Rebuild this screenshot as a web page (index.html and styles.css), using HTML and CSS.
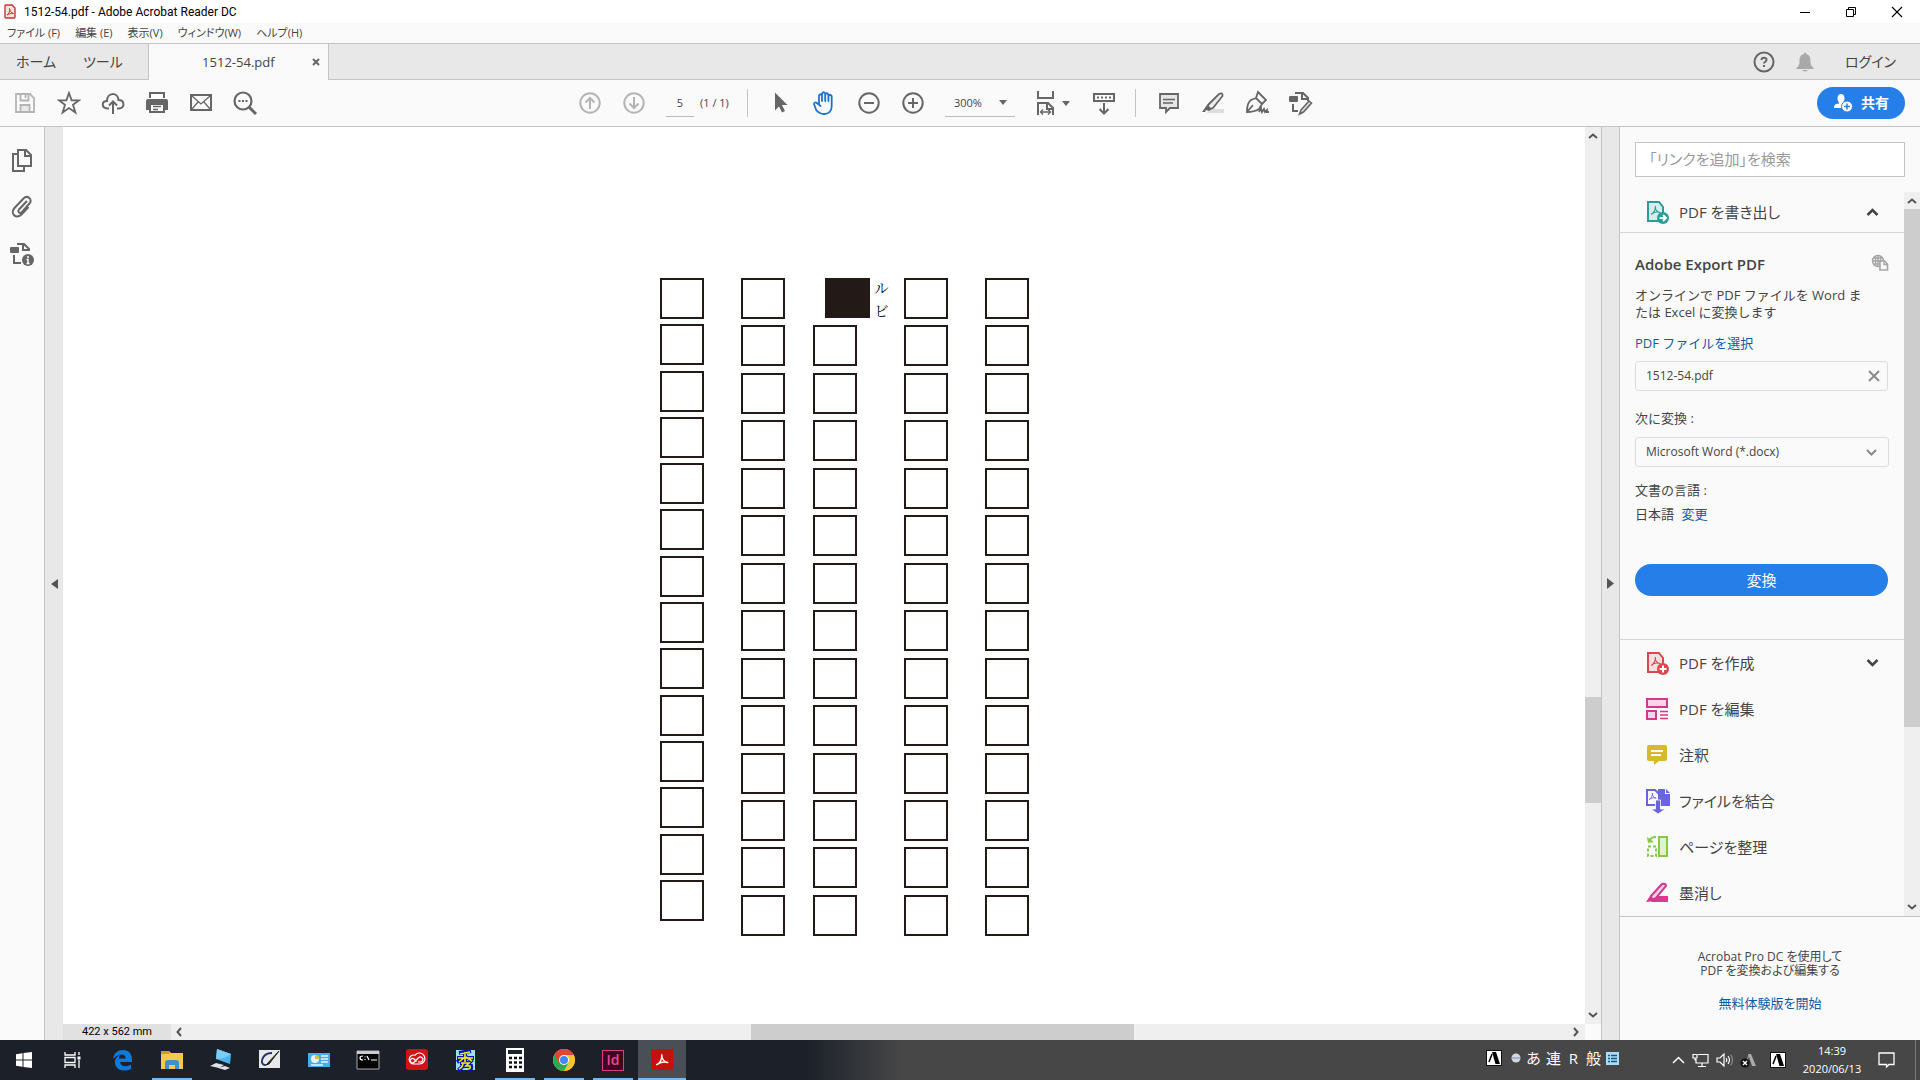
FILE: index.html
```html
<!DOCTYPE html>
<html lang="ja">
<head>
<meta charset="utf-8">
<title>1512-54.pdf - Adobe Acrobat Reader DC</title>
<link rel="stylesheet" href="styles.css">
</head>
<body>
<svg width="0" height="0" class="defs" aria-hidden="true">
  <defs>
    <symbol id="acro" viewBox="0 0 12 12"><path d="M1.5 10C4 9 6.300 5 5.800 1.500C5.500 5 8 8 11 8.200C7 7 4 8 1.500 10Z" fill="none" stroke="currentColor" stroke-width="1.200" stroke-linejoin="round"/></symbol>
    <symbol id="up" viewBox="0 0 10 6"><path d="M1 5L5 1.500L9 5" fill="none" stroke="currentColor" stroke-width="2"/></symbol>
    <symbol id="down" viewBox="0 0 10 6"><path d="M1 1L5 4.500L9 1" fill="none" stroke="currentColor" stroke-width="2"/></symbol>
    <symbol id="ime" viewBox="0 0 16 16"><rect width="16" height="16" fill="#111"/><rect x="1" y="1" width="14" height="14" fill="#fff"/><path d="M6 2h4l4 12h-4.500z" fill="#000"/><path d="M6 4L3 12" stroke="#000" stroke-width="1.500"/></symbol>
  </defs>
</svg>
<header>
  <div class="titlebar">
    <svg width="12" height="16" viewBox="0 0 12 16"><path d="M1 2q0-1 1-1h6l3 3v9q0 1-1 1H2q-1 0-1-1z" fill="#fbe3e1" stroke="#c5352f" stroke-width="1.400"/><path d="M3 11C5 10 6 7 5.500 4.500C6 7 7 9 9.500 9.500C7 9 5 10 3 11Z" fill="none" stroke="#d5322b"/></svg>
    <h1>1512-54.pdf - Adobe Acrobat Reader DC</h1>
    <div class="winbtns">
      <button aria-label="最小化"><svg width="12" height="12"><path d="M1 6.500h10" stroke="#000"/></svg></button>
      <button aria-label="元に戻す"><svg width="12" height="12" fill="none" stroke="#000"><path d="M1.500 3.500h7v7h-7zM3.500 3v-1.500h7v7H9"/></svg></button>
      <button aria-label="閉じる"><svg width="12" height="12"><path d="M1 1l10 10M11 1L1 11" stroke="#000" stroke-width="1.100"/></svg></button>
    </div>
  </div>
  <nav class="menubar"><button>ファイル (F)</button><button>編集 (E)</button><button>表示(V)</button><button>ウィンドウ(W)</button><button>ヘルプ(H)</button></nav>
  <div class="tabs">
    <button class="home">ホーム</button><button class="tools">ツール</button>
    <div class="tab"><span>1512-54.pdf</span><button aria-label="タブを閉じる"><svg width="8" height="8"><path d="M1 1l6 6M7 1L1 7" stroke="#666" stroke-width="2"/></svg></button></div>
    <div class="account">
      <button aria-label="ヘルプ"><svg width="22" height="22" fill="none" stroke="#666" stroke-width="2"><circle cx="11" cy="11" r="9.500"/><path d="M8.500 9C8.500 6 13.500 6 13.500 9C13.500 10.500 11 11 11 12.500M11 14v2"/></svg></button>
      <button aria-label="通知"><svg width="18" height="20" fill="#a9a9a9"><path d="M8 1q1-1 2 0v1c4 1 4.500 4 4.500 7 0 4 1 5 3 7v1H.500v-1c2-2 3-3 3-7 0-3 .500-6 4.500-7zM6 18h6q-3 3-6 0z"/></svg></button>
      <button class="login">ログイン</button>
    </div>
  </div>
  <div class="toolbar">
    <div class="group">
      <button aria-label="保存" class="off"><svg width="24" height="24" fill="none" stroke="currentColor" stroke-width="1.800"><path d="M3 3h14l4 4v14H3z"/><path d="M7.500 3v6.500h8V3M12.500 4v3"/><path d="M7.500 20v-6h9v6" fill="#e8e8e8"/></svg></button>
      <button aria-label="お気に入り"><svg width="24" height="24" fill="none" stroke="currentColor" stroke-width="1.800"><path d="M12 2l2.600 7.300H22l-6 4.500 2.400 7.700L12 17l-6.400 4.500L8 13.800 2 9.300h7.400z"/></svg></button>
      <button aria-label="アップロード"><svg width="24" height="24" fill="none" stroke="currentColor" stroke-width="2"><path d="M8 17.500H6.500C0 17 .500 10 6 10C6 1 17 1 17.500 9C24 9 24 17.500 18 17.500h-2"/><path d="M12 23V11M8 14.500l4-4 4 4"/></svg></button>
      <button aria-label="印刷"><svg width="24" height="24" fill="currentColor"><path d="M4 1h16v6H4zM3 8h18q2 0 2 2v9h-3v3H4v-3H1v-9q0-2 2-2z"/><path d="M6 3h12v5H6zM6 14h12v6H6z" fill="#fff"/><path d="M8 15.500h8M8 18.500h5" stroke="currentColor" stroke-width="1.500"/></svg></button>
      <button aria-label="メール"><svg width="24" height="24" fill="none" stroke="currentColor"><rect x="2" y="4" width="20" height="15" stroke-width="2"/><path d="M3 5l9 8 9-8M3 18l6-7M21 18l-6-7" stroke-width="1.300"/></svg></button>
      <button aria-label="検索"><svg width="26" height="26" fill="none" stroke="currentColor" stroke-width="2.200"><circle cx="11" cy="11" r="8.500"/><path d="M17 17l7 7" stroke-width="3"/><path d="M6.500 11h2m1.500 0h2m1.500 0h2" stroke-width="2"/></svg></button>
    </div>
    <div class="group center">
      <button aria-label="前のページ" class="off"><svg width="24" height="24" fill="none" stroke="currentColor" stroke-width="2"><circle cx="12" cy="12" r="9.700"/><path d="M12 18V7M7.500 11.500L12 7l4.500 4.500"/></svg></button>
      <button aria-label="次のページ" class="off"><svg width="24" height="24" fill="none" stroke="currentColor" stroke-width="2"><circle cx="12" cy="12" r="9.700"/><path d="M12 6v11M7.500 12.500L12 17l4.500-4.500"/></svg></button>
      <input class="page" aria-label="ページ" value="5"><span class="count">(1 / 1)</span>
      <span class="sep"></span>
      <button aria-label="選択"><svg width="24" height="24" fill="currentColor"><path d="M6 1.500v18l4-4 3 6 3-1.500-3-6h5.500z"/></svg></button>
      <button aria-label="手のひら" class="blue"><svg width="26" height="26" fill="none" stroke="currentColor" stroke-width="1.800" stroke-linecap="round"><path d="M7 14V5.500q1.500-2.500 3 0V11M10 6V3.500q1.600-2.500 3.200 0V11M13.200 4.500q1.600-2.500 3.200 0V11M16.400 7.500V6q1.700-2 3.300 0V16c0 5-3 8-7.500 8-4 0-6-1.500-8-4L2 14q.500-3 3.500-.500L8.500 16"/></svg></button>
      <button aria-label="縮小"><svg width="24" height="24" fill="none" stroke="currentColor" stroke-width="2"><circle cx="12" cy="12" r="9.700"/><path d="M7 12h10"/></svg></button>
      <button aria-label="拡大"><svg width="24" height="24" fill="none" stroke="currentColor" stroke-width="2"><circle cx="12" cy="12" r="9.700"/><path d="M7 12h10M12 7v10"/></svg></button>
      <div class="zoom"><select aria-label="倍率"><option>300%</option></select><svg width="8" height="5"><path d="M0 0h8L4 5z" fill="#666"/></svg></div>
      <button aria-label="幅に合わせる" class="fit"><svg width="20" height="26" fill="none" stroke="currentColor" stroke-width="2"><path d="M2 1v7h15V1"/><path d="M2 25V13h10l5 5v7M11 13v6h6"/><path d="M5 22h9M7 19.500L4.500 22 7 24.500M12 19.500l2.500 2.500-2.500 2.500" stroke-width="1.300"/></svg><svg width="8" height="5"><path d="M0 0h8L4 5z" fill="#666"/></svg></button>
      <button aria-label="ツールバーを隠す"><svg width="24" height="26" fill="none" stroke="currentColor" stroke-width="2"><rect x="2" y="4" width="20" height="7"/><path d="M5 7.500h14" stroke-dasharray="2 2"/><path d="M12 13v10M7.500 19l4.500 4.500 4.500-4.500"/></svg></button>
      <span class="sep"></span>
      <button aria-label="注釈"><svg width="24" height="24" fill="#e5e5e5" stroke="currentColor" stroke-width="1.800"><path d="M3 3h18v14h-8l-4 4v-4H3z"/><path d="M6 8.500h12M6 12h10" stroke-width="1.300"/></svg></button>
      <button aria-label="ハイライト"><svg width="26" height="24"><path d="M10 18h14v4H7z" fill="#ddd"/><path d="M8 14L19 3q4-2 3.500 2L13 17l-4 1z" fill="#eee" stroke="currentColor" stroke-width="1.800"/><path d="M7 14l5 4-3 2-3-1-1 2H2z" fill="currentColor"/></svg></button>
      <button aria-label="署名"><svg width="26" height="26" fill="none" stroke="currentColor" stroke-width="1.800"><path d="M3 22c0-6 1-10 4-12l5-2 6 6-3 5c-3 2-7 3-12 3zM3 22l6-7M12 8l2-6 8 8-4 4"/><path d="M15 22l2-4 1 4 2-3 1 3 2-2v2h2"/></svg></button>
      <button aria-label="その他のツール"><svg width="26" height="26" fill="none" stroke="currentColor" stroke-width="2"><path d="M7 3h8l5 5v3M14 3v6h6M5 14v7h5"/><rect x="1" y="6" width="9" height="6" rx="1" fill="currentColor" stroke="none"/><path d="M13 20l8-9 2.500 2-8 9-4 2z" fill="#ddd" stroke-width="1.600"/></svg></button>
    </div>
    <button class="share"><svg width="20" height="18" fill="#fff"><path d="M4.500 4.500a3.500 4.500 0 0 1 7 0c0 2-1 3.500-1.500 4v1c2 .500 2 1 2 1L10 14H1c0-4 2-4 5-4.500v-1C5.500 8 4.500 6.500 4.500 4.500z"/><circle cx="14" cy="12.500" r="5.500" stroke="#267fe8"/><path d="M11 12.500h6M14 9.500v6" stroke="#267fe8" stroke-width="1.500"/></svg>共有</button>
  </div>
</header>
<main>
  <nav class="rail">
    <button aria-label="サムネール"><svg width="24" height="26" fill="none" stroke="currentColor" stroke-width="2"><path d="M8 3h8l5 5v11H8zM15 3v6h6"/><path d="M8 7H3v17h11v-5"/></svg></button>
    <button aria-label="添付ファイル"><svg width="24" height="26" fill="none" stroke="currentColor" stroke-width="2"><path d="M17 7L9 15.500c-2 2.500 1 4.500 3 2.500l7.500-8.500C23 5.500 17.500.500 13.500 4.500L4.500 14c-5 6 2 11.500 7 6.500l7-7.500"/></svg></button>
    <button aria-label="文書情報"><svg width="26" height="26" fill="none" stroke="currentColor" stroke-width="2"><path d="M8 3h7l5 5v2M14 3v6h6M5 14v8h7"/><rect x="1" y="6" width="9" height="6" rx="1" fill="currentColor" stroke="none"/><circle cx="19" cy="19" r="6" fill="currentColor" stroke="none"/><path d="M19 15v2M17.500 18.500H19v4m-1.500 0h3" stroke="#fff" stroke-width="1.500"/></svg></button>
  </nav>
  <button class="gutter left" aria-label="ナビゲーションを開く"><svg width="7" height="10"><path d="M7 0v10L0 5z" fill="#555"/></svg></button>
  <section class="doc">
    <div class="view">
      <div class="page-art">
        <div class="col short"><i></i><i></i><i></i><i></i><i></i><i></i><i></i><i></i><i></i><i></i><i></i><i></i><i></i><i></i></div>
        <div class="col"><i></i><i></i><i></i><i></i><i></i><i></i><i></i><i></i><i></i><i></i><i></i><i></i><i></i><i></i></div>
        <div class="col"><div class="ruby"><b></b><div><span>ル</span><span>ビ</span></div></div><i></i><i></i><i></i><i></i><i></i><i></i><i></i><i></i><i></i><i></i><i></i><i></i><i></i></div>
        <div class="col"><i></i><i></i><i></i><i></i><i></i><i></i><i></i><i></i><i></i><i></i><i></i><i></i><i></i><i></i></div>
        <div class="col"><i></i><i></i><i></i><i></i><i></i><i></i><i></i><i></i><i></i><i></i><i></i><i></i><i></i><i></i></div>
      </div>
    </div>
    <div class="vbar"><svg width="10" height="6"><use href="#up"/></svg><div class="track"><div class="thumb"></div></div><svg width="10" height="6"><use href="#down"/></svg></div>
    <div class="hbar"><span class="size">422 x 562 mm</span><svg width="6" height="10"><path d="M5 1L1.500 5L5 9" fill="none" stroke="#555" stroke-width="2"/></svg><div class="track"><div class="thumb"></div></div><svg width="6" height="10"><path d="M1 1l3.500 4L1 9" fill="none" stroke="#555" stroke-width="2"/></svg></div>
  </section>
  <button class="gutter right" aria-label="ツールパネルを閉じる"><svg width="7" height="11"><path d="M0 0v11l7-5.500z" fill="#555"/></svg></button>
  <aside>
    <input class="search" aria-label="検索" placeholder="「リンクを追加」を検索">
    <div class="scroller">
      <div class="list">
        <button class="tool open"><svg width="24" height="24"><path d="M3 2h11l4 5v14H3z" fill="#d5eeec" stroke="#2a9b96" stroke-width="2"/><use href="#acro" x="5" y="5" width="11" height="11" color="#2a9b96"/><circle cx="18" cy="18" r="6" fill="#2a9b96"/><path d="M14.500 18h6M18 15l3 3-3 3" fill="none" stroke="#fff" stroke-width="2"/></svg>PDF を書き出し<svg class="chev" width="13" height="8"><path d="M1.500 7l5-5 5 5" fill="none" stroke="#444" stroke-width="2.500"/></svg></button>
        <div class="export">
          <div class="head"><h2>Adobe Export PDF</h2><svg width="18" height="18" fill="none" stroke="#a5a5a5" stroke-width="1.400"><circle cx="7" cy="7" r="5.500"/><path d="M7 1v12M1 7h12M2 4h10M4.500 2v10M9.500 2v6M2.500 10h6"/><path d="M9 7h4.500l3 3v6H9z" fill="#fafafa" stroke-width="1.600"/><path d="M13 7v3.500h3.500"/></svg></div>
          <p>オンラインで PDF ファイルを Word または Excel に変換します</p>
          <a href="#" class="pick">PDF ファイルを選択</a>
          <div class="file"><span>1512-54.pdf</span><button aria-label="削除"><svg width="12" height="12"><path d="M1 1l10 10M11 1L1 11" stroke="#8a8a8a" stroke-width="2"/></svg></button></div>
          <label for="fmt">次に変換 :</label>
          <div class="format"><select id="fmt"><option>Microsoft Word (*.docx)</option></select><svg width="11" height="7"><path d="M1 1l4.500 4.500L10 1" fill="none" stroke="#8a8a8a" stroke-width="2"/></svg></div>
          <div class="lang">文書の言語 :</div>
          <div class="change">日本語 <a href="#">変更</a></div>
          <button class="convert">変換</button>
        </div>
        <button class="tool"><svg width="24" height="24"><path d="M3 2h11l4 5v14H3z" fill="#fbdfe0" stroke="#d7484f" stroke-width="2"/><use href="#acro" x="5" y="5" width="11" height="11" color="#d7484f"/><circle cx="18" cy="18" r="6" fill="#d7484f"/><path d="M14.500 18h7M18 14.500v7" stroke="#fff" stroke-width="2"/></svg>PDF を作成<svg class="chev" width="13" height="8"><path d="M1.500 1l5 5 5-5" fill="none" stroke="#444" stroke-width="2.500"/></svg></button>
        <button class="tool"><svg width="24" height="24" fill="#fad4e8" stroke="#cf3a8d" stroke-width="2"><path d="M2 2h20v8H2zM2 14h9v8H2z"/><path d="M15 14.500h8M15 18h8M15 21.500h8" stroke-width="1.400"/></svg>PDF を編集</button>
        <button class="tool"><svg width="24" height="24"><path d="M4 2h16q2 0 2 2v12q0 2-2 2h-6l-5 4v-4H4q-2 0-2-2V4q0-2 2-2z" fill="#d9b92c"/><path d="M6 8h12M6 12h10" stroke="#fff" stroke-width="1.800"/></svg>注釈</button>
        <button class="tool"><svg width="26" height="26"><path d="M13 1h7v5h5v12H13z" fill="#6a63e2"/><path d="M21 1l4 4h-4z" fill="#6a63e2"/><path d="M2 2h8l4 4v11H2z" fill="#fff" stroke="#6a63e2" stroke-width="2"/><use href="#acro" x="3" y="4" width="9" height="9" color="#6a63e2"/><path d="M10.500 12h5v9h5L13 26 6 21h4.500z" fill="#6a63e2" stroke="#fff" stroke-width=".8"/></svg>ファイルを結合</button>
        <button class="tool"><svg width="24" height="24" fill="none" stroke="#86c94a" stroke-width="2"><path d="M14 2h8v19h-8z" fill="#dff2cf"/><path d="M3 11.500h8v9.500H3z" stroke-dasharray="3 2"/><path d="M11 2Q6 2 4 6"/><path d="M2 2l1 6 6-1z" fill="#86c94a" stroke="none"/></svg>ページを整理</button>
        <button class="tool"><svg width="24" height="24"><path d="M12 15h11v6H6z" fill="#da3b8e"/><path d="M6 15L17 3q4-1 4 2L11 17l-4 2z" fill="#f9cfe4" stroke="#cf3a8d" stroke-width="2"/><path d="M5 15l5 5-9 1z" fill="#cf3a8d"/></svg>墨消し</button>
      </div>
      <div class="vbar"><svg width="10" height="6"><use href="#up"/></svg><div class="track"><div class="thumb"></div></div><svg width="10" height="6"><use href="#down"/></svg></div>
    </div>
    <div class="promo"><p>Acrobat Pro DC を使用して<br>PDF を変換および編集する</p><a href="#">無料体験版を開始</a></div>
  </aside>
</main>
<footer>
  <div class="apps">
    <button aria-label="スタート"><svg width="16" height="16" fill="#fff"><path d="M0 2.200L6.500 1.300v6.200H0zM7.500 1.100L16 0v7.500H7.500zM0 8.500h6.500v6.200L0 13.800zM7.500 8.500H16V16l-8.500-1.100z"/></svg></button>
    <button aria-label="タスクビュー" class="view-btn"><svg width="17" height="16" fill="none" stroke="#fff" stroke-width="1.300"><path d="M1 0v3h10V0M1 5.500h10v5H1zM1 16v-3h10v3M15 0v3M15 8v8"/><path d="M13.500 4.500h3v3h-3z" fill="#fff" stroke="none"/></svg></button>
    <button aria-label="Edge"><svg width="22" height="22"><path d="M1 10C2 4 6 1 11 1c6 0 9 4 9 10v2H8c1 5 7 5 11 2.500V20C10 24 2 20 3 12c.5-3 3-5.500 6-6.500C7 6.500 7 8 7 9.500h6.500C14 4 6 4 1 10z" fill="#0c79dc"/></svg></button>
    <button aria-label="エクスプローラー" class="run"><svg width="24" height="22"><path d="M1 2h8l2 2h12v16H1z" fill="#f7c84e"/><path d="M1 2h8l1 3H1z" fill="#d9982a"/><path d="M5 20v-6q0-3 3-3h8q3 0 3 3v6h-4v-4H9v4z" fill="#3d93c9"/></svg></button>
    <button aria-label="リモート"><svg width="24" height="22"><path d="M8 0l14 5-1 10L7 10z" fill="#49b6ee"/><path d="M8 0l14 5-7 4-8 1z" fill="#7bcdf5"/><path d="M1 17l6-3 8 2-5 3zM9 19l7-2 5 2-5 2z" fill="#dde3e8"/></svg></button>
    <button aria-label="ペイント"><svg width="24" height="22"><path d="M1 1h21v18H1z" fill="#e8e8e8"/><path d="M14 4C3 4 1 17 8 16" fill="none" stroke="#1d3264" stroke-width="1.800"/><path d="M21 2L8 16l3-1z" fill="#222" stroke="#222"/></svg></button>
    <button aria-label="パネル"><svg width="22" height="18"><path d="M0 2h22v14H0z" fill="#48aee6"/><circle cx="7" cy="8" r="4" fill="#dff3ff"/><path d="M7 8V4a4 4 0 0 1 4 4z" fill="#e8b73a"/><path d="M13 5h7M13 8h7M13 11h7M3 14h12" stroke="#e6f6ff" stroke-width="1.300"/></svg></button>
    <button aria-label="コマンドプロンプト"><svg width="24" height="20"><path d="M1 1h22v18H1z" fill="#050505" stroke="#aaa"/><path d="M1 1h22v3H1z" fill="#ccc"/><path d="M7 6q-3 0-3 2t3 2M9 6.500v.8M9 9v1M11 6l2 4M15 10h6" fill="none" stroke="#fff" stroke-width="1.200"/></svg></button>
    <button aria-label="Creative Cloud"><svg width="22" height="22"><rect width="22" height="21" rx="3" fill="#cf1318"/><path d="M8 15a4.500 4.500 0 1 1 1-8.800A5.500 5.500 0 1 1 13.500 15zM10.500 12.500L8 10a2.200 2.200 0 1 0 0 3.200l4.500-4.400a2.500 2.500 0 1 1 1 4H12" fill="none" stroke="#fff" stroke-width="1.200"/></svg></button>
    <button aria-label="秀丸"><svg width="22" height="22"><path d="M1 1h19v20H1z" fill="#9ae6e6"/><path d="M4 4l12-2M2 9h17M10 3v10M10 8l-8 5M11 8l7 4M5 14h9l-3 3h5q1 4-3 4M8 14q0 5-5 7" fill="none" stroke="#0710c7" stroke-width="4"/><path d="M5 5l10-2M3 9h15M10 3v10M10 8l-6 5M11 8l6 4M6 14h8l-3 3h4q1 3-2 3M8 14q0 4-4 6" fill="none" stroke="#f4ee18" stroke-width="1.600"/></svg></button>
    <button aria-label="電卓" class="run"><svg width="18" height="24"><path d="M0 0h18v24H0z" fill="#fff"/><path d="M2 2h14v4H2z" fill="#1c212b"/><path d="M3 10h3m2 0h3m2 0h3M3 14.500h3m2 0h3m2 0h3M3 19h3m2 0h3m2 0h3" stroke="#111" stroke-width="2.500"/></svg></button>
    <button aria-label="Chrome" class="run"><svg width="22" height="22"><circle cx="11" cy="11" r="11" fill="#f5c52b"/><path d="M11 11L1.500 5.500A11 11 0 0 0 11 22l5-8z" fill="#2da94f"/><path d="M11 11V6h9.700A11 11 0 0 0 1.500 5.500L6 14z" fill="#e4453a"/><path d="M11 6h9.700A11 11 0 0 1 11 22l5-9z" fill="#f5c52b"/><circle cx="11" cy="11" r="5" fill="#fff"/><circle cx="11" cy="11" r="4" fill="#4285f4"/></svg></button>
    <button aria-label="InDesign" class="run"><span class="indd">Id</span></button>
    <button aria-label="Acrobat" class="run active"><svg width="22" height="22"><rect width="22" height="21" rx="1" fill="#c6100c"/><use href="#acro" x="4" y="4" width="14" height="14" color="#fff"/></svg></button>
  </div>
  <div class="imebar"><svg width="16" height="16"><use href="#ime"/></svg><svg width="10" height="10"><circle cx="5" cy="5" r="4.500" fill="#cfd8e3"/><path d="M1 5h8" stroke="#8292a5"/></svg><span>あ</span><span>連</span><span>R</span><span>般</span><svg width="13" height="13"><path d="M0 0h13v13H0z" fill="#a9def8"/><path d="M2 3.500h2m1 0h6M2 6.500h2m1 0h6M2 9.500h2m1 0h6" stroke="#1b5480" stroke-width="1.300"/></svg></div>
  <div class="tray">
    <svg width="13" height="8"><path d="M1 7l5.500-5.500L12 7" fill="none" stroke="#fff" stroke-width="1.500"/></svg>
    <svg width="17" height="15" fill="none" stroke="#fff" stroke-width="1.200"><path d="M6 1.500h10v8.500H4V6M10 10v3.500M6 13.500h8M1 1.500h4V5H1zM3 5v2h1"/></svg>
    <svg width="17" height="14" fill="none" stroke="#fff" stroke-width="1.200"><path d="M1 5h3l4-4v12L4 9H1zM10 5q1.500 2 0 4M12 3q3 4 0 8"/><path d="M14.500 1.500q4 5.500 0 11" stroke="#888"/></svg>
    <svg width="18" height="16"><path d="M8 2h3l5 12h-4z" fill="#aaa"/><path d="M9 3L6 11" stroke="#aaa"/><circle cx="5" cy="11" r="4.500" fill="#111"/><path d="M3 9l4 4M7 9l-4 4" stroke="#fff" stroke-width="1.400"/></svg>
    <svg class="ime2" width="16" height="16"><use href="#ime"/></svg>
    <div class="clock">14:39<br>2020/06/13</div>
    <button aria-label="通知センター"><svg width="18" height="17"><path d="M1 1h15v11.500h-5L8.500 15v-2.500H1z" fill="none" stroke="#fff" stroke-width="1.300"/></svg></button>
    <span class="peek"></span>
  </div>
</footer>
</body>
</html>
```
FILE: styles.css
```css
* { box-sizing: border-box; }
body {
  margin: 0; height: 100vh; display: flex; flex-direction: column; overflow: hidden;
  font: 12px/16px "Open Sans", "Noto Sans CJK JP", sans-serif;
  font-feature-settings: "palt"; color: #444; background: #fafafa;
}
button { border: 0; padding: 0; margin: 0; background: none; font: inherit; color: inherit; font-feature-settings: inherit; display: flex; align-items: center; justify-content: center; white-space: nowrap; }
input, select { font: inherit; color: inherit; font-feature-settings: inherit; border: 0; background: none; padding: 0; margin: 0; min-width: 0; border-radius: 0; }
select { appearance: none; width: 100%; height: 100%; }
a { color: #0d5aa7; text-decoration: none; }
h1, h2, p { margin: 0; }
svg { flex: none; display: block; }
.defs { position: absolute; }

.titlebar { height: 23px; background: #fff; display: flex; align-items: center; padding-left: 4px; gap: 8px; color: #000; }
.titlebar h1 { font: 12px/16px Roboto, sans-serif; flex: 1; }
.winbtns { display: flex; }
.winbtns button { width: 46px; height: 22px; }
.menubar { height: 20px; display: flex; gap: 15px; padding-left: 7px; font-size: 11px; }
.tabs { height: 37px; display: flex; background: #e8e8e8; border: solid #c4c4c4; border-width: 1px 0; font-size: 14px; }
.home { margin-left: 16px; }
.tools { margin-left: 27px; margin-right: 25px; }
.tab { width: 181px; margin-bottom: -1px; background: #fafafa; border: solid #c4c4c4; border-width: 0 1px; display: flex; align-items: center; }
.tab span { flex: 1; padding-left: 36px; text-align: center; font-size: 13px; }
.tab button { padding-right: 8px; width: 36px; justify-content: flex-end; }
.account { margin-left: auto; display: flex; padding-right: 24px; }
.account button:first-child { margin-right: 21px; }
.login { margin-left: 31px; }

.toolbar { height: 47px; display: grid; grid-template-columns: 1fr auto 1fr; align-items: center; padding-right: 15px; border-bottom: 1px solid #c4c4c4; color: #666; }
.group { display: flex; align-items: center; }
.group:first-child { padding-left: 3px; }
.group button { width: 44px; height: 46px; }
.center { padding-right: 14px; }
.off, .group .off { color: #b4b4b4; }
.group .blue { color: #1e74cc; }
.page { width: 28px; height: 28px; margin-left: 10px; text-align: center; border-bottom: 1px solid #bbb; }
.page, .count, .zoom { color: #444; font-size: 11px; }
.count { margin-left: 6px; width: 47px; }
.sep { width: 1px; height: 28px; background: #c4c4c4; margin-right: 11px; }
.zoom { width: 70px; height: 28px; margin: 0 9px 0 10px; display: flex; align-items: center; border-bottom: 1px solid #bbb; }
.zoom select { padding-left: 9px; }
.zoom svg { margin-right: 8px; }
.group .fit { width: 58px; gap: 6px; }
.fit + button { margin-right: 9px; }
.share { justify-self: end; width: 88px; height: 32px; border-radius: 16px; background: #267fe8; color: #fff; font-size: 14px; font-weight: 700; gap: 8px; }

main { flex: 1; min-height: 0; display: flex; }
.rail { width: 45px; border-right: 1px solid #c4c4c4; display: flex; flex-direction: column; align-items: center; gap: 21px; padding-top: 20px; color: #666; }
.gutter { width: 18px; background: #e8e8e8; }
.gutter.right { width: 19px; border: solid #c4c4c4; border-width: 0 1px; }
.doc { flex: 1; display: grid; grid-template: 1fr 16px / 1fr 16px; background: #fafafa; min-width: 0; }
.view { background: #fff; padding-top: 151px; overflow: hidden; }
.page-art { display: flex; width: 370px; height: 658px; margin-left: 39.2%; }
.col { width: 44px; display: flex; flex-direction: column; justify-content: space-between; }
.col + .col { margin-left: 37px; }
.col:nth-child(3) { margin-left: 28px; }
.col:nth-child(4) { margin-left: 47px; }
.col.short { height: 643px; }
.col i { height: 41px; border: 2px solid #231a17; }
.ruby { display: flex; height: 41px; margin-left: 12px; gap: 5px; }
.ruby b { flex: none; width: 45px; height: 40px; background: #231a17; }
.ruby div { display: flex; flex-direction: column; justify-content: space-between; }
.ruby span { font: 14px/18px "Noto Serif CJK JP", "Noto Sans CJK JP", serif; color: #000; font-feature-settings: normal; }
.vbar { width: 16px; background: #efefef; display: flex; flex-direction: column; align-items: center; padding: 6px 0; color: #555; }
.vbar .track { flex: 1; width: 100%; margin: 5px 0; display: flex; flex-direction: column; }
.doc .vbar .track { padding-top: 553px; }
.vbar .thumb { height: 106px; background: #cdcdcd; }
.hbar { background: #efefef; display: flex; align-items: center; padding-right: 6px; }
.size { width: 108px; background: #e1e1e1; color: #000; text-align: center; font-family: Roboto, sans-serif; font-size: 11px; }
.hbar svg { margin-left: 5px; }
.hbar .track { flex: 1; height: 16px; padding-left: 37.5%; }
.hbar .thumb { height: 16px; background: #cdcdcd; width: 383px; }

aside { width: 300px; display: flex; flex-direction: column; }
.search { margin: 15px 15px 0; height: 35px; border: 1px solid #c4c4c4; background: #fff; padding: 0 13px 2px; font-size: 15px; }
.search::placeholder { color: #999; }
.scroller { flex: 1; min-height: 0; margin-top: 15px; display: flex; border-bottom: 1px solid #c4c4c4; overflow: hidden; }
.list { flex: 1; }
.scroller .thumb { height: 518px; }
.tool { height: 46px; width: 100%; padding: 0 25px 1px; gap: 8px; font-size: 15px; justify-content: flex-start; }
.tool svg { width: 26px; }
.tool .chev { width: 13px; margin-left: auto; }
.tool.open { height: 41px; border-bottom: 1px solid #d5d5d5; }
.export { padding: 21px 15px 0; border-bottom: 1px solid #d5d5d5; font-size: 13px; font-feature-settings: normal; display: flex; flex-direction: column; height: 407px; }
.export p { line-height: 17px; margin-top: 13px; width: 238px; }
.head { display: flex; justify-content: space-between; }
.head h2 { font-size: 15px; line-height: 20px; font-weight: 600; }
.pick { margin-top: 13px; line-height: 18px; }
.file, .format { border: 1px solid #ddd; border-radius: 3px; height: 30px; display: flex; align-items: center; justify-content: space-between; margin-top: 9px; padding: 0 7px 0 10px; font-size: 12px; }
.file { margin-right: 1px; }
.export label { margin-top: 18px; line-height: 18px; }
.format { margin-top: 10px; padding-right: 11px; }
.lang { margin-top: 14px; line-height: 18px; }
.change { margin-top: 6px; line-height: 18px; }
.change a { margin-left: 4px; }
.convert { margin-top: 41px; margin-right: 1px; height: 32px; border-radius: 16px; background: #267fe8; color: #fff; font-size: 15px; flex: none; }
.promo { height: 123px; padding-top: 33px; text-align: center; line-height: 14px; }
.promo p { margin-bottom: 18px; }
.promo a { font-size: 13px; }

footer { height: 40px; display: flex; background: linear-gradient(90deg, #1b2029 0, #1b2029 42%, #474747 47%); color: #fff; }
.apps { display: flex; gap: 1px; }
.apps button { width: 48px; height: 40px; }
.apps .view-btn { width: 49px; padding-right: 3px; }
.apps .run { background: linear-gradient(#76b9ed, #76b9ed) center bottom / 40px 2px no-repeat; }
.apps .active { background-color: #4a4f57; background-size: 48px 2px; }
.indd { width: 22px; height: 21px; border: 1px solid #d9408a; background: #3c0620; color: #f0479a; font: 600 14px/18px "Open Sans", sans-serif; }
.imebar { margin-left: auto; display: flex; align-items: center; gap: 5px; font-size: 15px; padding-bottom: 4px; }
.imebar span { width: 15px; text-align: center; }
.imebar svg:first-child { margin-right: 4px; }
.tray { display: flex; align-items: center; margin-left: 53px; gap: 7px; }
.ime2 { margin: 0 6px 0 5px; }
.clock { text-align: center; font-size: 11px; line-height: 18px; width: 66px; }
.tray button { margin-left: 6px; }
.peek { width: 1px; height: 40px; background: #777; margin: 0 4px 0 12px; }
```
